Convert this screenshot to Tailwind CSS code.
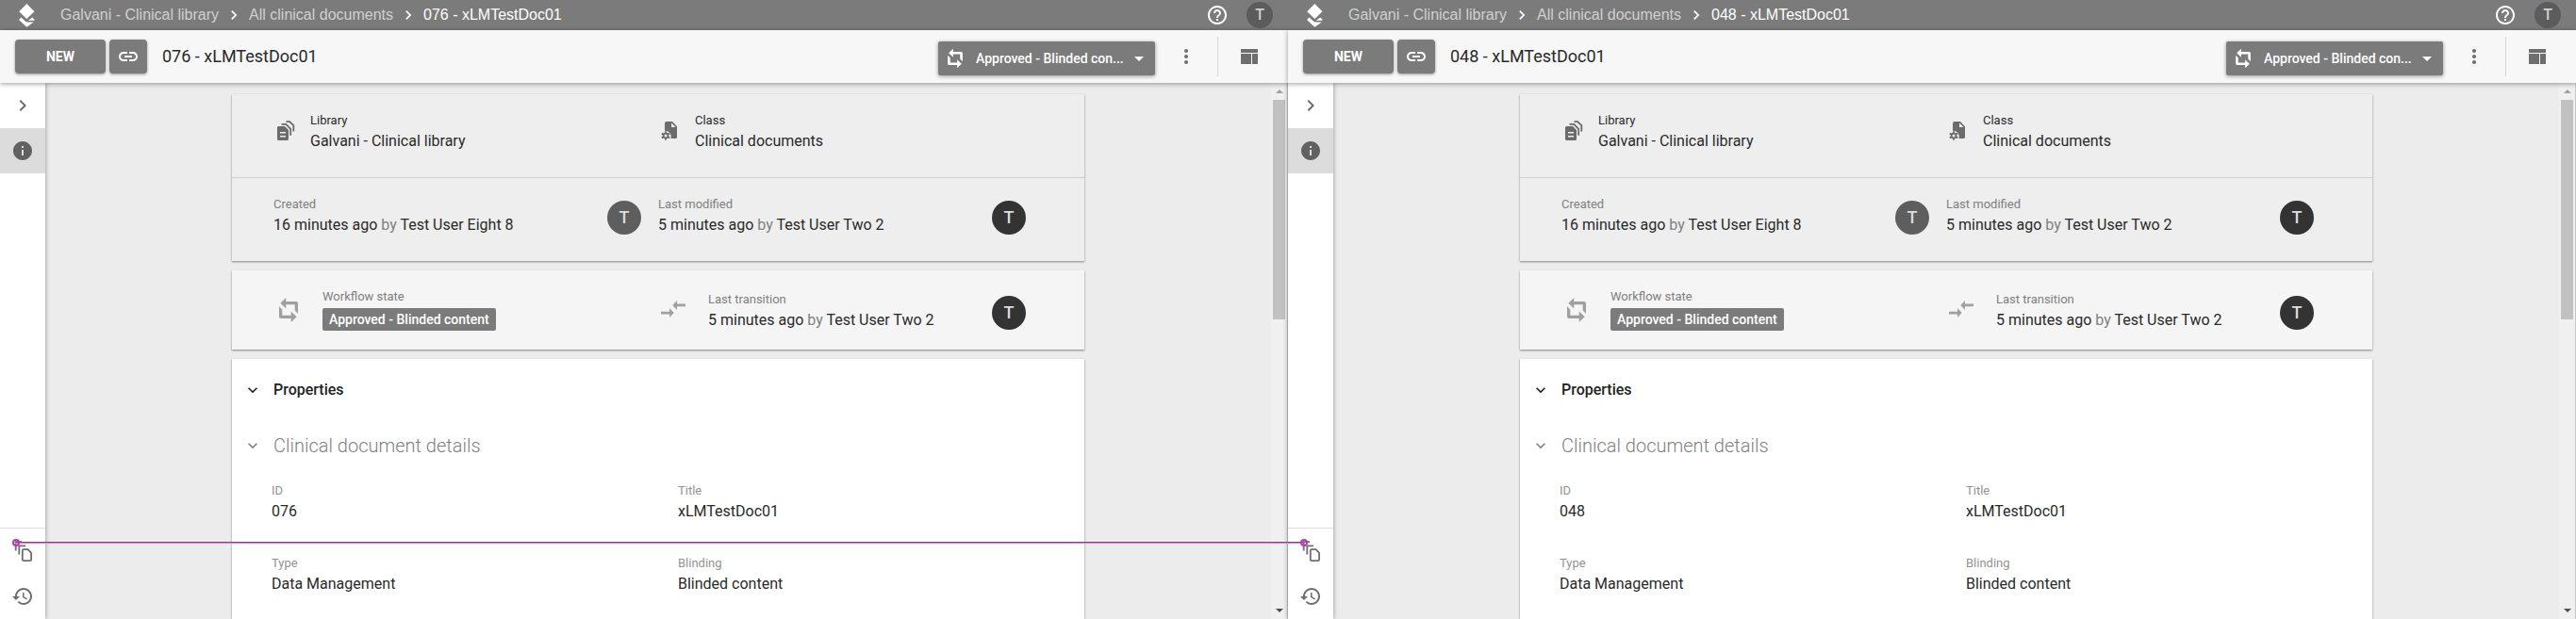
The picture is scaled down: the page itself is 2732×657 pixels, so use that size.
<!DOCTYPE html>
<html lang="en">
<head>
<meta charset="utf-8">
<title>Clinical documents</title>
<script src="https://cdn.jsdelivr.net/npm/@tailwindcss/browser@4"></script>
</head>
<body class="relative flex h-screen overflow-hidden bg-[#ececec] font-['Roboto',sans-serif] text-base text-[#2a2a2a]">

<svg class="hidden" aria-hidden="true">
  <symbol id="logo" viewBox="0 0 17 25"><path d="M8.3 0l8.2 8.2-8.2 7.8L.2 8.2zM0 17l2.5-2.6 4.4 4.2c.8.7 1.6.8 2.5.8l6.3.1-7.4 5.3zM9.8 17.7l4.4-3.3 2.6 2.6-.8.8z"/></symbol>
  <symbol id="chevron" viewBox="0 0 24 24"><path d="M10 6L8.59 7.41 13.17 12l-4.58 4.59L10 18l6-6z"/></symbol>
  <symbol id="chevron-down" viewBox="0 0 24 24"><path d="M7.41 8.59L12 13.17l4.59-4.58L18 10l-6 6-6-6z"/></symbol>
  <symbol id="help" viewBox="0 0 24 24"><path d="M11 18h2v-2h-2v2zm1-16C6.48 2 2 6.48 2 12s4.48 10 10 10 10-4.48 10-10S17.52 2 12 2zm0 18c-4.41 0-8-3.59-8-8s3.59-8 8-8 8 3.59 8 8-3.59 8-8 8zm0-14c-2.21 0-4 1.79-4 4h2c0-1.1.9-2 2-2s2 .9 2 2c0 2-3 1.75-3 5h2c0-2.25 3-2.5 3-5 0-2.21-1.79-4-4-4z"/></symbol>
  <symbol id="link" viewBox="0 0 24 24"><path d="M3.9 12c0-1.71 1.39-3.1 3.1-3.1h4V7H7c-2.76 0-5 2.24-5 5s2.24 5 5 5h4v-1.9H7c-1.71 0-3.1-1.39-3.1-3.1zM8 13h8v-2H8v2zm9-6h-4v1.9h4c1.71 0 3.1 1.39 3.1 3.1s-1.39 3.1-3.1 3.1h-4V17h4c2.76 0 5-2.24 5-5s-2.24-5-5-5z"/></symbol>
  <symbol id="info" viewBox="0 0 24 24"><path d="M12 2C6.48 2 2 6.48 2 12s4.48 10 10 10 10-4.48 10-10S17.52 2 12 2zm1 15h-2v-6h2v6zm0-8h-2V7h2v2z"/></symbol>
  <symbol id="history" viewBox="0 0 24 24"><path d="M13 3c-4.97 0-9 4.03-9 9H1l3.89 3.89.07.14L9 12H6c0-3.87 3.13-7 7-7s7 3.13 7 7-3.13 7-7 7c-1.93 0-3.68-.79-4.94-2.06l-1.42 1.42C8.27 19.99 10.51 21 13 21c4.97 0 9-4.03 9-9s-4.03-9-9-9zm-1 5v5l4.28 2.54.72-1.21-3.5-2.08V8H12z"/></symbol>
  <symbol id="copies" viewBox="0 0 24 24"><path fill="none" stroke="currentColor" stroke-width="1.8" d="M4.7 11.5V2.2H11M8.3 15.6V6.4H15M13 10.2h4.6l3.5 3.6v7.1a1.2 1.2 0 0 1-1.2 1.2H13a1.2 1.2 0 0 1-1.2-1.2v-9.5A1.2 1.2 0 0 1 13 10.2z"/></symbol>
  <symbol id="dots" viewBox="0 0 24 24"><circle cx="12" cy="6" r="2"/><circle cx="12" cy="12" r="2"/><circle cx="12" cy="18" r="2"/></symbol>
  <symbol id="layout" viewBox="0 0 24 24"><path d="M3 4h18v4H3zM3 9h11v11H3zM15 9h6v11h-6z"/></symbol>
  <symbol id="workflow" viewBox="0 0 24 28"><path id="half" d="M3.3 6.8L9.3 1v4H20a2 2 0 0 1 2 2v11l-3.3-3.4V8.2H9.3v4.2z"/><use href="#half" transform="rotate(180 12 14)"/></symbol>
  <symbol id="transition" viewBox="0 0 26 18"><path d="M0 11.7h9V8l4.7 5L9 18v-3.6H0zM26 3.6h-9V0l-4.7 5 4.7 5V6.3h9z"/></symbol>
  <symbol id="files" viewBox="0 0 24 24"><path fill-rule="evenodd" d="M4.5 8H11l4 4v9.5a1.5 1.5 0 0 1-1.5 1.5h-9A1.5 1.5 0 0 1 3 21.5v-12A1.5 1.5 0 0 1 4.5 8zM6 14v1.5h6V14zM6 18v1.5h6V18z"/><path fill="none" stroke="currentColor" stroke-width="1.8" d="M7.5 5.9h4.8l4.9 4.9v6.9M12.5 3.1h3.6l4.2 4.1v6.3"/></symbol>
  <symbol id="class" viewBox="0 0 24 24"><path fill-rule="evenodd" d="M8 3h6l5 5.2v11.3a1.5 1.5 0 0 1-1.5 1.5h-5c1.1-4.4-1.5-8.3-6.5-8.3V5a2 2 0 0 1 2-2zM13 4.4V9h4.6z"/><circle cx="7" cy="18" r="2.4" fill="none" stroke="currentColor" stroke-width="1.8"/><path fill="none" stroke="currentColor" stroke-width="1.8" d="M7 13.2v2M7 20.8v2M2.8 15.6l1.8 1M9.4 19.4l1.8 1M2.8 20.4l1.8-1M9.4 16.6l1.8-1"/></symbol>
</svg>

<template id="pane">
  <section class="flex min-w-0 flex-1 flex-col">
    <header class="flex h-8 shrink-0 items-center bg-[#7b7b7b] pr-4 pl-5 text-white">
      <svg class="h-[25px] w-[17px] fill-current"><use href="#logo"/></svg>
      <nav class="ml-[27px] flex items-center font-['Liberation_Sans',sans-serif]" aria-label="Breadcrumb">
        <a href="#" class="text-[#d0d0d0]">Galvani - Clinical library</a>
        <svg class="mx-1.5 size-5 fill-current"><use href="#chevron"/></svg>
        <a href="#" class="text-[#d0d0d0]">All clinical documents</a>
        <svg class="mx-1.5 size-5 fill-current"><use href="#chevron"/></svg>
        <a href="#" aria-current="page"><span data-number></span> - xLMTestDoc01</a>
      </nav>
      <button class="ml-auto" aria-label="Help"><svg class="size-6 fill-current"><use href="#help"/></svg></button>
      <button class="ml-[19px] size-7 rounded-full bg-[#5c5c5c] font-medium text-[#d0d0d0]">T</button>
    </header>

    <div class="z-10 flex h-14 shrink-0 items-center bg-[#f7f7f7] pr-[29px] pl-4 shadow-[0_1px_5px_rgba(0,0,0,0.4)]">
      <button class="h-9 w-24 rounded bg-[#7b7b7b] text-sm font-bold text-white shadow-[0_1px_3px_rgba(0,0,0,0.4)]">NEW</button>
      <button class="ml-1 flex h-9 w-10 items-center justify-center rounded bg-[#7b7b7b] text-white shadow-[0_1px_3px_rgba(0,0,0,0.4)]" aria-label="Copy link"><svg class="size-6 fill-current"><use href="#link"/></svg></button>
      <h1 class="ml-4 text-lg"><span data-number></span> - xLMTestDoc01</h1>
      <button class="mt-1 ml-auto flex h-9 w-[230px] items-center rounded-xs bg-[#7b7b7b] pr-3 pl-2 text-sm font-medium text-white shadow-[0_1px_4px_rgba(0,0,0,0.4)]">
        <svg class="h-[22px] w-5 fill-current"><use href="#workflow"/></svg>
        <span class="ml-3 min-w-0 flex-1 truncate text-left">Approved - Blinded con...</span>
        <svg class="h-[5px] w-2.5 fill-current" viewBox="0 0 10 5"><path d="M0 0h10L5 5z"/></svg>
      </button>
      <button class="ml-[21px] text-[#6e6e6e]" aria-label="More"><svg class="size-6 fill-current"><use href="#dots"/></svg></button>
      <span class="ml-[21px] h-[42px] w-px bg-[#d6d6d6]"></span>
      <button class="ml-[21px] text-[#6e6e6e]" aria-label="Layout"><svg class="size-6 fill-current"><use href="#layout"/></svg></button>
    </div>

    <div class="flex min-h-0 flex-1 border-r border-[#c8c8c8]">
      <aside class="flex w-12 shrink-0 flex-col bg-white text-[#6e6e6e] shadow-[0_0_5px_rgba(0,0,0,0.4)]">
        <button class="flex h-12 items-center justify-center" aria-label="Expand"><svg class="size-6 fill-current"><use href="#chevron"/></svg></button>
        <button class="flex h-12 items-center justify-center bg-[#dcdcdc] text-[#616161]" aria-label="Information"><svg class="size-6 fill-current"><use href="#info"/></svg></button>
        <div class="mt-auto border-t border-[#dcdcdc]">
          <button class="flex h-12 w-full items-center justify-center" aria-label="Versions"><svg class="size-6"><use href="#copies"/></svg></button>
          <button class="flex h-12 w-full items-center justify-center" aria-label="History"><svg class="size-6 fill-current"><use href="#history"/></svg></button>
        </div>
      </aside>

      <main class="min-w-0 flex-1 overflow-hidden">
        <div class="mx-auto flex h-full max-w-[904px] flex-col gap-2.5 pt-3">
          <div class="shrink-0 bg-[#eeeeee] shadow-[0_1px_2px_rgba(0,0,0,0.45)]">
            <div class="grid h-[89px] grid-cols-2 border-b border-[#cfcfcf] px-11 pt-[18px]">
              <div class="flex gap-3.5 pl-px">
                <svg class="mt-2 size-6 fill-current text-[#6b6b6b]"><use href="#files"/></svg>
                <div><div class="text-[13px] leading-5">Library</div><div class="leading-6">Galvani - Clinical library</div></div>
              </div>
              <div class="flex gap-3.5 pl-px">
                <svg class="mt-2 size-6 fill-current text-[#6b6b6b]"><use href="#class"/></svg>
                <div><div class="text-[13px] leading-5">Class</div><div class="leading-6">Clinical documents</div></div>
              </div>
            </div>
            <div class="grid h-[88px] grid-cols-2 px-11 pt-[18px]">
              <div class="flex justify-between pr-[18px]">
                <div><div class="text-[13px] leading-5 text-[#808080]">Created</div><div class="leading-6">16 minutes ago <span class="text-[#808080]">by</span> Test User Eight 8</div></div>
                <span class="mt-1.5 flex size-9 items-center justify-center rounded-full bg-[#5e5e5e] text-lg font-medium text-[#dedede]">T</span>
              </div>
              <div class="flex justify-between pr-[18px]">
                <div><div class="text-[13px] leading-5 text-[#808080]">Last modified</div><div class="leading-6">5 minutes ago <span class="text-[#808080]">by</span> Test User Two 2</div></div>
                <span class="mt-1.5 flex size-9 items-center justify-center rounded-full bg-[#333333] text-lg font-medium text-[#dedede]">T</span>
              </div>
            </div>
          </div>

          <div class="grid h-[84px] shrink-0 grid-cols-2 bg-[#f5f5f5] px-11 pt-[18px] shadow-[0_1px_2px_rgba(0,0,0,0.45)]">
            <div class="flex pl-1">
              <svg class="mt-2.5 h-7 w-6 fill-current text-[#a0a0a0]"><use href="#workflow"/></svg>
              <div class="ml-6"><div class="text-[13px] leading-5 text-[#808080]">Workflow state</div><div class="mt-0.5 rounded-xs bg-[#7b7b7b] px-[7px] text-sm leading-6 font-medium text-white">Approved - Blinded content</div></div>
            </div>
            <div class="flex pt-[3px] pr-[18px] pl-[3px]">
              <svg class="mt-[11px] h-[18px] w-[26px] fill-current text-[#a0a0a0]"><use href="#transition"/></svg>
              <div class="ml-6"><div class="text-[13px] leading-5 text-[#808080]">Last transition</div><div class="leading-6">5 minutes ago <span class="text-[#808080]">by</span> Test User Two 2</div></div>
              <span class="mt-1.5 ml-auto flex size-9 items-center justify-center rounded-full bg-[#333333] text-lg font-medium text-[#dedede]">T</span>
            </div>
          </div>

          <div class="flex-1 bg-white pt-[21px] pl-3 shadow-[0_1px_2px_rgba(0,0,0,0.45)]">
            <h2><button class="flex items-center gap-3 leading-6 font-medium text-[#222222]"><svg class="size-5 fill-current"><use href="#chevron-down"/></svg>Properties</button></h2>
            <h3 class="mt-[33px]"><button class="flex items-center gap-3 text-xl leading-7 font-light text-[#808080]"><svg class="size-5 fill-current"><use href="#chevron-down"/></svg>Clinical document details</button></h3>
            <dl class="mt-6 grid grid-cols-2 gap-y-[33px] pl-[30px]">
              <div><dt class="text-[13px] leading-5 text-[#939393]">ID</dt><dd class="leading-6" data-number></dd></div>
              <div><dt class="text-[13px] leading-5 text-[#939393]">Title</dt><dd class="leading-6">xLMTestDoc01</dd></div>
              <div><dt class="text-[13px] leading-5 text-[#939393]">Type</dt><dd class="leading-6">Data Management</dd></div>
              <div><dt class="text-[13px] leading-5 text-[#939393]">Blinding</dt><dd class="leading-6">Blinded content</dd></div>
            </dl>
          </div>
        </div>
      </main>

      <div class="flex w-[17px] shrink-0 flex-col items-center bg-[#f0f0f0]" aria-hidden="true">
        <svg class="my-[7px] h-1 w-2 shrink-0 fill-[#a0a0a0]" viewBox="0 0 8 4"><path d="M0 4h8L4 0z"/></svg>
        <div class="h-[41%] w-[13px] bg-[#c1c1c1]"></div>
        <svg class="mt-auto mb-[7px] h-1 w-2 shrink-0 fill-[#505050]" viewBox="0 0 8 4"><path d="M0 0h8L4 4z"/></svg>
      </div>
    </div>
  </section>
</template>

<div class="absolute bottom-20 left-4 z-20 h-0.5 w-1/2 border-b border-[#d58ad3] bg-[#a826a4]" aria-hidden="true">
  <span class="absolute -top-[3px] -left-[3px] size-2 rounded-full border-2 border-[#b838b4]"></span>
  <span class="absolute -top-[3px] -right-[5px] size-2 rounded-full border-2 border-[#b838b4]"></span>
</div>

<script>
  for (const number of ['076', '048']) {
    const pane = document.getElementById('pane').content.cloneNode(true);
    pane.querySelectorAll('[data-number]').forEach(el => { el.textContent = number; });
    document.body.append(pane);
  }
</script>
</body>
</html>
